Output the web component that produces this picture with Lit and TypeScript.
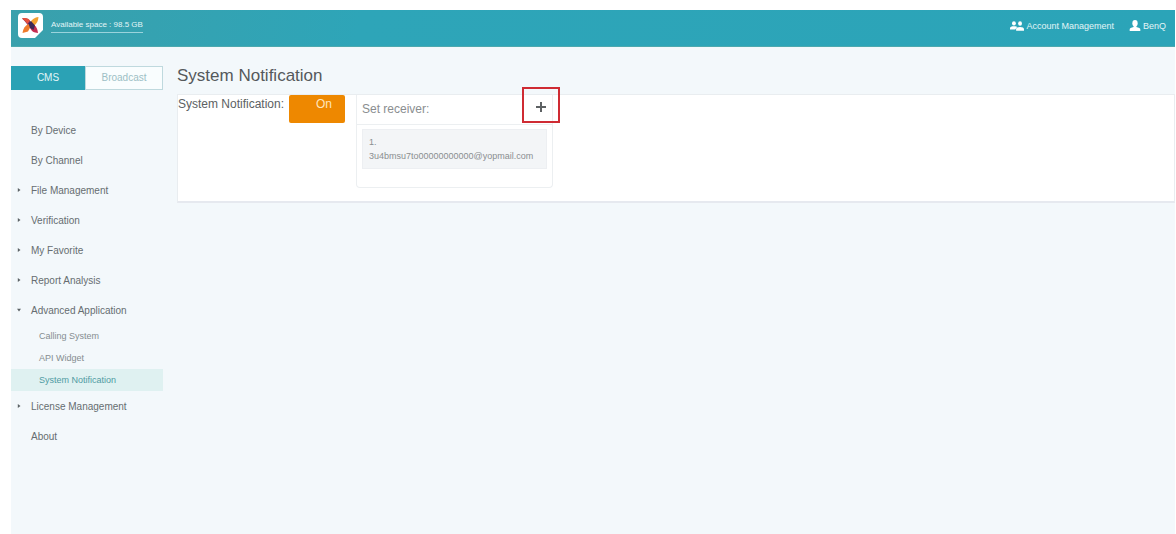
import { LitElement, html, css, svg } from "lit";
import { customElement, state } from "lit/decorators.js";
import { classMap } from "lit/directives/class-map.js";

interface MenuItem {
  label: string;
  arrow?: "right" | "down";
  children?: string[];
}

const MENU: MenuItem[] = [
  { label: "By Device" },
  { label: "By Channel" },
  { label: "File Management", arrow: "right" },
  { label: "Verification", arrow: "right" },
  { label: "My Favorite", arrow: "right" },
  { label: "Report Analysis", arrow: "right" },
  {
    label: "Advanced Application",
    arrow: "down",
    children: ["Calling System", "API Widget", "System Notification"],
  },
  { label: "License Management", arrow: "right" },
  { label: "About" },
];

const person = svg`
  <ellipse cx="6" cy="3.6" rx="2.9" ry="3.5"/>
  <path d="M4.5 6h3v1.600c2.600.5 4.300 1.200 4.300 2.600V12H.2v-1.800C.2 8.800 1.900 8.100 4.500 7.600z"/>`;

@customElement("app-header")
export class AppHeader extends LitElement {
  static styles = css`
    :host { display: block; }
    .bar {
      display: flex;
      align-items: center;
      height: 37px;
      box-sizing: border-box;
      padding: 0 9px 5px 7px;
      background: linear-gradient(100deg, #3aa0ac, #2ea5b8 30%, #2ba4b8);
      border-bottom: 1px solid #4da9ae;
      color: #fff;
      font-size: 9px;
      line-height: 12px;
    }
    .logo { display: block; width: 25px; height: 25px; }
    .space {
      margin-left: 8px;
      border-bottom: 1px solid #9ad3dc;
      font-size: 8px;
      line-height: 14px;
      color: #e2f5f7;
    }
    .links { display: flex; gap: 15px; margin-left: auto; }
    a {
      display: flex;
      align-items: center;
      gap: 2px;
      color: #e2f5f7;
      text-decoration: none;
    }
    svg { fill: #fff; }
    .one, .two { height: 11px; }
  `;
  render() {
    return html`<header class="bar">
      <svg class="logo" viewBox="0 0 25 25" role="img" aria-label="Home">
        <path d="M4 0h17a4 4 0 0 1 4 4v13l-8 8H4a4 4 0 0 1-4-4V4a4 4 0 0 1 4-4z" fill="#fff"/>
        <path d="M4 5.500C8 4.500 11 5.500 13 9l3 4-4 2C9.500 11.500 7 8 4 5.500z" fill="#7a2c66"/>
        <path d="M4 5.500C7.500 4.500 9.800 5 12 7.500L9.500 11C8 9 6 7 4 5.500z" fill="#e8503c"/>
        <path d="M20.500 4c-.3 4-1.500 6.500-4.500 8.500l-4-1c.8-4.500 4-7 8.500-7.500z" fill="#f2a030"/>
        <path d="M13 13l-3 5.500-5.500 1.500c.5-4.500 2.500-7.500 6-9z" fill="#ee7a2c"/>
        <path d="M12 14.500l4-2.500c2.200 1.500 3.600 4 4 8-4-.2-6.500-1.500-8-5.500z" fill="#c42c50"/>
        <path d="M10.500 10.500L13 8l4 4.500-1.500 4.500-3.500-2z" fill="#3d2857"/>
      </svg>
      <span class="space">Available space : 98.5 GB</span>
      <nav class="links">
        <a href="#account">
          <svg class="two" width="14" viewBox="0 0 16 12" aria-hidden="true">
            <ellipse cx="4.500" cy="3.500" rx="2.200" ry="2.500"/>
            <path d="M0 10.500V9c0-1.500 2-2.200 4.500-2.200S8 7 8 8l-2 2.500z"/>
            <ellipse cx="11.500" cy="3.800" rx="2.200" ry="2.600"/>
            <path d="M7 12v-1.800C7 8.500 8.800 7.600 11.500 7.600S16 8.500 16 10.200V12z"/>
          </svg>Account Management</a>
        <a href="#user">
          <svg class="one" width="12" viewBox="0 0 12 12" aria-hidden="true">${person}</svg>BenQ</a>
      </nav>
    </header>`;
  }
}

@customElement("app-menu")
export class AppMenu extends LitElement {
  @state() private mode = "CMS";
  static styles = css`
    :host { display: block; }
    .modes {
      display: grid;
      grid-template-columns: 74px 1fr;
      height: 24px;
      margin-bottom: 25px;
    }
    button {
      font: 10px/22px "Liberation Sans", Arial, sans-serif;
      padding: 0;
      border: 1px solid #bfd9de;
      background: #f9fdfe;
      color: #9dbfc5;
    }
    .on { background: #2ba2b5; border-color: #2ba2b5; color: #e2f5f7; }
    ul { list-style: none; margin: 0; padding: 0; }
    a {
      display: flex;
      align-items: center;
      padding-left: 6px;
      gap: 10px;
      height: 30px;
      font-size: 10px;
      color: #666d70;
      text-decoration: none;
    }
    .arrow { width: 4px; height: 4px; fill: #5b6265; }
    .sub a {
      height: 22px;
      padding-left: 28px;
      font-size: 9px;
      color: #858d90;
    }
    .sub a.current { background: #dff1f1; color: #4f9ba3; }
  `;
  render() {
    return html`
      <div class="modes">
        ${["CMS", "Broadcast"].map(
          (m) => html`<button class=${classMap({ on: this.mode === m })}
            @click=${() => (this.mode = m)}>${m}</button>`
        )}
      </div>
      <nav><ul>
        ${MENU.map((item) => html`<li>
          <a href="#menu">
            <svg class="arrow" viewBox="0 0 4 4" aria-hidden="true">
              ${item.arrow === "right" ? svg`<path d="M.8 0 3.500 2 .8 4z"/>` : null}
              ${item.arrow === "down" ? svg`<path d="M0 .8h4L2 3.500z"/>` : null}
            </svg>${item.label}</a>
          ${item.children
            ? html`<ul class="sub">${item.children.map(
                (c) => html`<li><a href="#sub" class=${classMap({ current: c === "System Notification" })}>${c}</a></li>`
              )}</ul>`
            : null}
        </li>`)}
      </ul></nav>`;
  }
}

@customElement("notification-panel")
export class NotificationPanel extends LitElement {
  @state() private enabled = true;
  static styles = css`
    :host { display: block; }
    h1 {
      margin: 0;
      font-size: 17px;
      line-height: 20px;
      font-weight: 400;
      color: #55595b;
    }
    .card {
      display: flex;
      align-items: flex-start;
      margin-top: 8px;
      padding-bottom: 13px;
      background: #fff;
      border: 1px solid #e9edf0;
      border-bottom: 2px solid #e6e9ef;
    }
    .label {
      width: 111px;
      font-size: 12px;
      line-height: 18px;
      color: #5c6163;
      white-space: nowrap;
    }
    .toggle {
      width: 56px;
      height: 28px;
      padding: 0 0 10px 14px;
      border: 0;
      border-radius: 2px;
      background: #ee8800;
      color: #ffe6bd;
      font: 12px/18px "Liberation Sans", Arial, sans-serif;
    }
    .receivers {
      width: 197px;
      margin-left: 11px;
      box-sizing: border-box;
      border: 1px solid #eceff1;
      border-top: 0;
      border-radius: 0 0 4px 4px;
      padding-bottom: 18px;
    }
    .head {
      display: flex;
      align-items: flex-start;
      justify-content: space-between;
      height: 29px;
      padding-left: 5px;
      border-bottom: 1px solid #eceff1;
      font-size: 12px;
      line-height: 28px;
      color: #8a8e90;
    }
    .add {
      position: relative;
      display: grid;
      place-items: center;
      width: 22px;
      height: 24px;
      padding: 0;
      border: 0;
      background: none;
    }
    .add svg { width: 10px; height: 10px; fill: #5d6163; }
    .mark {
      position: absolute;
      top: -8px;
      left: -8px;
      width: 34px;
      height: 32px;
      border: 2px solid #cf2b33;
    }
    ol { list-style: none; margin: 0; padding: 4px 5px 0; }
    li {
      padding: 5px 0 5px 6px;
      background: #f3f5f7;
      border: 1px solid #edeff2;
      font-size: 9px;
      line-height: 14px;
      color: #8a8e90;
      white-space: nowrap;
    }
  `;
  render() {
    return html`
      <h1>System Notification</h1>
      <section class="card">
        <span class="label" id="toggle-label">System Notification:</span>
        <button class="toggle" role="switch" aria-labelledby="toggle-label"
          aria-checked=${this.enabled ? "true" : "false"}
          @click=${() => (this.enabled = !this.enabled)}>${this.enabled ? "On" : "Off"}</button>
        <div class="receivers">
          <div class="head">
            <span>Set receiver:</span>
            <button class="add" aria-label="Add receiver">
              <svg viewBox="0 0 10 10" aria-hidden="true"><path d="M4 0h2v4h4v2H6v4H4V6H0V4h4z"/></svg>
              <span class="mark"></span>
            </button>
          </div>
          <ol><li>1.<br>3u4bmsu7to00000000000@yopmail.com</li></ol>
        </div>
      </section>`;
  }
}

@customElement("app-root")
export class AppRoot extends LitElement {
  static styles = css`
    :host {
      display: block;
      min-height: 100vh;
      box-sizing: border-box;
      padding: 10px 1px 0 11px;
      background: #fff;
      font-family: "Liberation Sans", Arial, sans-serif;
    }
    .page {
      display: grid;
      grid-template-columns: 152px minmax(0, 1fr);
      gap: 14px;
      min-height: calc(100vh - 47px);
      box-sizing: border-box;
      padding-top: 19px;
      background: #f3f8fb;
    }
  `;
  render() {
    return html`
      <app-header></app-header>
      <div class="page">
        <app-menu></app-menu>
        <notification-panel></notification-panel>
      </div>`;
  }
}
